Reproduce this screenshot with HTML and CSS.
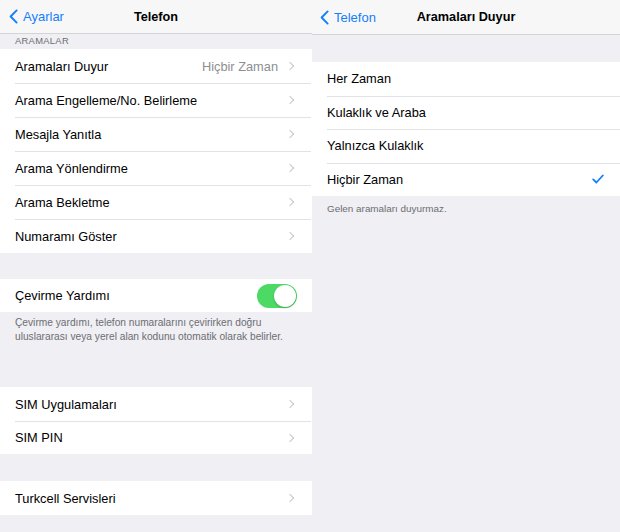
FILE: index.html
```html
<!DOCTYPE html>
<html lang="tr">
<head>
<meta charset="utf-8">
<title>Telefon</title>
<link rel="stylesheet" href="styles.css">
</head>
<body>
<div class="screens">
  <section class="panel panel-left">
    <header class="nav">
      <a class="back"><svg class="back-chev" viewBox="0 0 10 16" width="9" height="15"><path d="M8.5 1.2 L1.8 8 L8.5 14.8" fill="none" stroke="#157efb" stroke-width="2.1" stroke-linecap="round" stroke-linejoin="round"/></svg><span>Ayarlar</span></a>
      <h1 class="nav-title">Telefon</h1>
    </header>
    <div class="section-header">ARAMALAR</div>
    <ul class="group">
      <li class="row"><span class="label">Aramaları Duyur</span><span class="value">Hiçbir Zaman</span><span class="chev"></span></li>
      <li class="row"><span class="label">Arama Engelleme/No. Belirleme</span><span class="chev"></span></li>
      <li class="row"><span class="label">Mesajla Yanıtla</span><span class="chev"></span></li>
      <li class="row"><span class="label">Arama Yönlendirme</span><span class="chev"></span></li>
      <li class="row"><span class="label">Arama Bekletme</span><span class="chev"></span></li>
      <li class="row"><span class="label">Numaramı Göster</span><span class="chev"></span></li>
    </ul>
    <ul class="group group-dial">
      <li class="row"><span class="label">Çevirme Yardımı</span><span class="toggle"><span class="knob"></span></span></li>
    </ul>
    <p class="footer">Çevirme yardımı, telefon numaralarını çevirirken doğru uluslararası veya yerel alan kodunu otomatik olarak belirler.</p>
    <ul class="group group-sim">
      <li class="row"><span class="label">SIM Uygulamaları</span><span class="chev"></span></li>
      <li class="row"><span class="label">SIM PIN</span><span class="chev"></span></li>
    </ul>
    <ul class="group group-turk">
      <li class="row"><span class="label">Turkcell Servisleri</span><span class="chev"></span></li>
    </ul>
  </section>
  <section class="panel panel-right">
    <header class="nav">
      <a class="back"><svg class="back-chev" viewBox="0 0 10 16" width="9" height="15"><path d="M8.5 1.2 L1.8 8 L8.5 14.8" fill="none" stroke="#157efb" stroke-width="2.1" stroke-linecap="round" stroke-linejoin="round"/></svg><span>Telefon</span></a>
      <h1 class="nav-title">Aramaları Duyur</h1>
    </header>
    <ul class="group group-options">
      <li class="row"><span class="label">Her Zaman</span></li>
      <li class="row"><span class="label">Kulaklık ve Araba</span></li>
      <li class="row"><span class="label">Yalnızca Kulaklık</span></li>
      <li class="row"><span class="label">Hiçbir Zaman</span><svg class="check" viewBox="0 0 12 10" width="12" height="10"><path d="M1.2 5.4 L4.4 8.5 L10.8 1.5" fill="none" stroke="#157efb" stroke-width="1.8" stroke-linecap="round" stroke-linejoin="round"/></svg></li>
    </ul>
    <p class="footer">Gelen aramaları duyurmaz.</p>
  </section>
</div>
</body>
</html>
```

FILE: styles.css
```css
* { box-sizing: border-box; }
html, body { margin: 0; padding: 0; }
body {
  width: 620px;
  height: 532px;
  overflow: hidden;
  background: #efeff4;
  font-family: "Liberation Sans", Arial, sans-serif;
  color: #000;
}
.screens {
  display: flex;
  height: 532px;
}
.panel {
  display: flex;
  flex-direction: column;
  background: #efeff4;
  height: 532px;
}
.panel-left { width: 312px; }
.panel-right { flex: 1; }

.nav {
  position: relative;
  height: 35px;
  background: #f7f7f8;
  border-bottom: 1px solid #d4d4d8;
  display: flex;
  align-items: center;
  justify-content: center;
}
.panel-left .nav { height: 34px; }
.back {
  position: absolute;
  left: 9px;
  top: 0;
  height: 100%;
  display: flex;
  align-items: center;
  gap: 5px;
  color: #157efb;
  font-size: 13px;
}
.panel-right .back { left: 8px; }
.nav-title {
  margin: 0;
  font-size: 12.7px;
  font-weight: bold;
}

.section-header {
  height: 15px;
  padding: 2px 0 0 15px;
  font-size: 9.4px;
  color: #6d6d72;
  letter-spacing: 0.3px;
  line-height: 10px;
}

.group {
  list-style: none;
  margin: 0;
  padding: 0;
  background: #fff;
}
.row {
  position: relative;
  height: 34px;
  display: flex;
  align-items: center;
  padding: 0 14px 0 15px;
  font-size: 12.8px;
}
.panel-left .row { width: 311px; }
.row + .row::before {
  content: "";
  position: absolute;
  left: 15px;
  right: 0;
  top: 0;
  height: 1px;
  background: #e3e3e7;
}
.label { flex: 1; white-space: nowrap; }
.value {
  color: #8e8e93;
  margin-right: 9px;
}
.chev {
  width: 6px;
  height: 6px;
  border-top: 1.3px solid #c7c7cc;
  border-right: 1.3px solid #c7c7cc;
  transform: rotate(45deg);
  margin-right: 4px;
}

.group-dial { margin-top: 26px; }
.group-dial .row { height: 33px; }
.toggle {
  width: 40px;
  height: 24px;
  border-radius: 12px;
  background: #4cd964;
  position: relative;
}
.knob {
  position: absolute;
  right: 1px;
  top: 1px;
  width: 22px;
  height: 22px;
  border-radius: 50%;
  background: #fff;
  box-shadow: 0 1px 2px rgba(0,0,0,0.25);
}

.footer {
  margin: 0;
  padding: 4px 12px 0 15px;
  font-size: 10.2px;
  line-height: 14px;
  color: #6d6d72;
}
.panel-left .footer { height: 75px; }

.group-sim .row:last-child { height: 33px; }
.group-turk { margin-top: 27px; }

.group-options { margin-top: 27px; }
.group-options .row { height: 33.5px; padding-left: 15px; padding-right: 16px; }
.check { display: block; }
.panel-right .footer { padding-top: 6px; font-size: 9.9px; }
```
